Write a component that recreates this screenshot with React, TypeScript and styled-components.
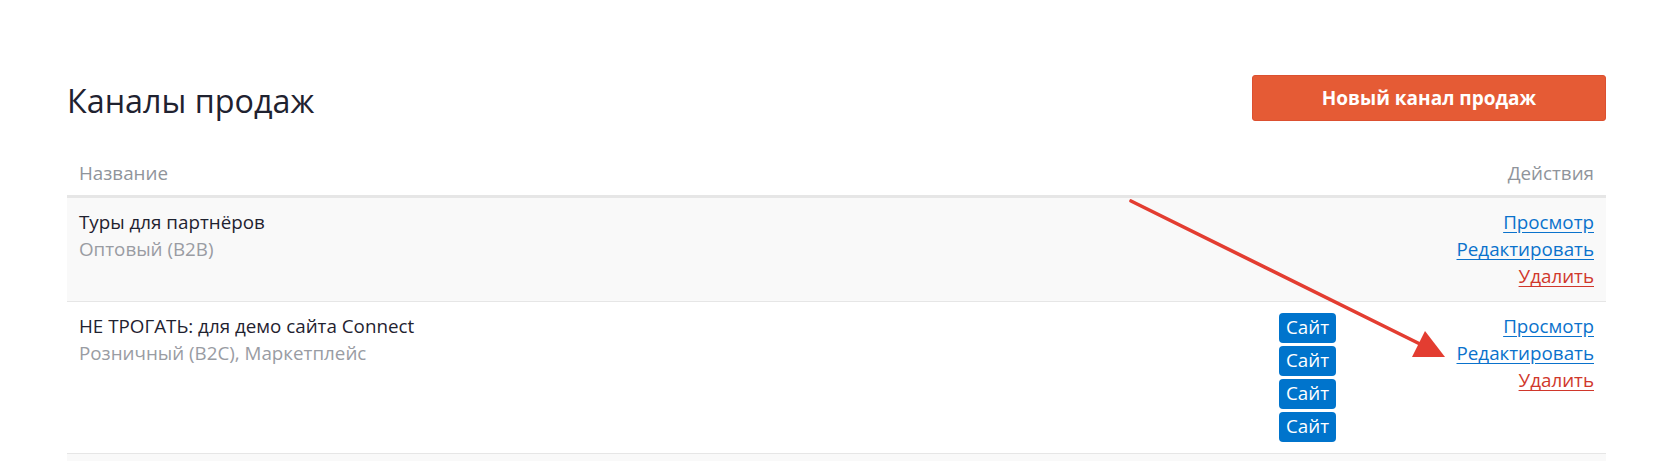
import React from 'react'
import styled, { createGlobalStyle } from 'styled-components'

const GlobalStyle = createGlobalStyle`
  html, body {
    margin: 0;
    padding: 0;
    background: #fff;
  }
  body {
    font-family: 'Open Sans', 'Noto Sans', sans-serif;
    font-size: 18.8px;
    line-height: 27px;
    color: #1f2230;
  }
`

type Channel = {
  name: string
  kinds: string
  sites: number
}

const channels: Channel[] = [
  { name: 'Туры для партнёров', kinds: 'Оптовый (B2B)', sites: 0 },
  { name: 'НЕ ТРОГАТЬ: для демо сайта Connect', kinds: 'Розничный (B2C), Маркетплейс', sites: 4 },
  { name: '', kinds: '', sites: 0 }
]

const App = () => {
  return (
    <Page>
      <GlobalStyle />
      <TopBar>
        <Title>Каналы продаж</Title>
        <PrimaryButton>Новый канал продаж</PrimaryButton>
      </TopBar>
      <Table>
        <HeadCell>Название</HeadCell>
        <HeadCell />
        <HeadCell $right>Действия</HeadCell>
        {channels.map((ch, i) => (
          <React.Fragment key={i}>
            <Cell $striped={i % 2 === 0}>
              <Name>{ch.name}</Name>
              <Kinds>{ch.kinds}</Kinds>
            </Cell>
            <Cell $striped={i % 2 === 0}>
              <Badges>
                {Array.from({ length: ch.sites }).map((_, j) => (
                  <Badge key={j}>Сайт</Badge>
                ))}
              </Badges>
            </Cell>
            <Cell $striped={i % 2 === 0} $right>
              {ch.name && (
                <Actions>
                  <Link href="#">Просмотр</Link>
                  <Link href="#">Редактировать</Link>
                  <Link href="#" $danger>
                    Удалить
                  </Link>
                </Actions>
              )}
            </Cell>
          </React.Fragment>
        ))}
      </Table>
      <Arrow width="1655" height="461" viewBox="0 0 1655 461">
        <line
          x1="1131"
          y1="201"
          x2="1420"
          y2="344"
          stroke="#e33d31"
          strokeWidth="3.6"
          strokeLinecap="round"
        />
        <polygon points="1425,331 1412,357 1445,357" fill="#e33d31" />
      </Arrow>
    </Page>
  )
}

const Page = styled.div`
  position: relative;
  height: 461px;
  overflow: hidden;
  padding: 75px 49px 0 67px;
  box-sizing: border-box;
`

const TopBar = styled.div`
  display: flex;
  align-items: center;
  justify-content: space-between;
  height: 46px;
  margin-bottom: 27px;
`

const Title = styled.h1`
  margin: 0;
  font-size: 32.3px;
  line-height: 40px;
  font-weight: 400;
  color: #1f2230;
  position: relative;
  top: 2px;
`

const PrimaryButton = styled.button`
  width: 354px;
  height: 46px;
  border: 1px solid #dc5030;
  border-radius: 3px;
  background: #e55b35;
  color: #fff;
  font-family: 'Open Sans', sans-serif;
  font-size: 19px;
  font-weight: 700;
  cursor: pointer;
`

const Table = styled.div`
  display: grid;
  grid-template-columns: 1fr 177px 162px;
`

const HeadCell = styled.div<{ $right?: boolean }>`
  padding: 12px 12px 8px;
  border-bottom: 2px solid #e6e6e6;
  color: #8f949b;
  text-align: ${(p) => (p.$right ? 'right' : 'left')};
  min-height: 27px;
`

const Cell = styled.div<{ $striped?: boolean; $right?: boolean }>`
  padding: 11px 12px;
  border-top: 1px solid #e6e6e6;
  background: ${(p) => (p.$striped ? '#f9f9f9' : '#fff')};
  text-align: ${(p) => (p.$right ? 'right' : 'left')};
  min-height: 81px;
`

const Name = styled.div`
  color: #1f2230;
`

const Kinds = styled.div`
  color: #999ca3;
`

const Badges = styled.div`
  display: flex;
  flex-direction: column;
  align-items: flex-start;
  gap: 3px;
`

const Badge = styled.span`
  display: inline-block;
  height: 30px;
  line-height: 29px;
  padding: 0 7px;
  border-radius: 4px;
  background: #0074cc;
  color: #fff;
  font-size: 18.8px;
`

const Actions = styled.div`
  display: flex;
  flex-direction: column;
  align-items: flex-end;
`

const Link = styled.a<{ $danger?: boolean }>`
  color: ${(p) => (p.$danger ? '#d0372b' : '#0a72cc')};
  text-decoration: underline;
  text-underline-offset: 3px;
`

const Arrow = styled.svg`
  position: absolute;
  left: 0;
  top: 0;
  pointer-events: none;
`

export default App
